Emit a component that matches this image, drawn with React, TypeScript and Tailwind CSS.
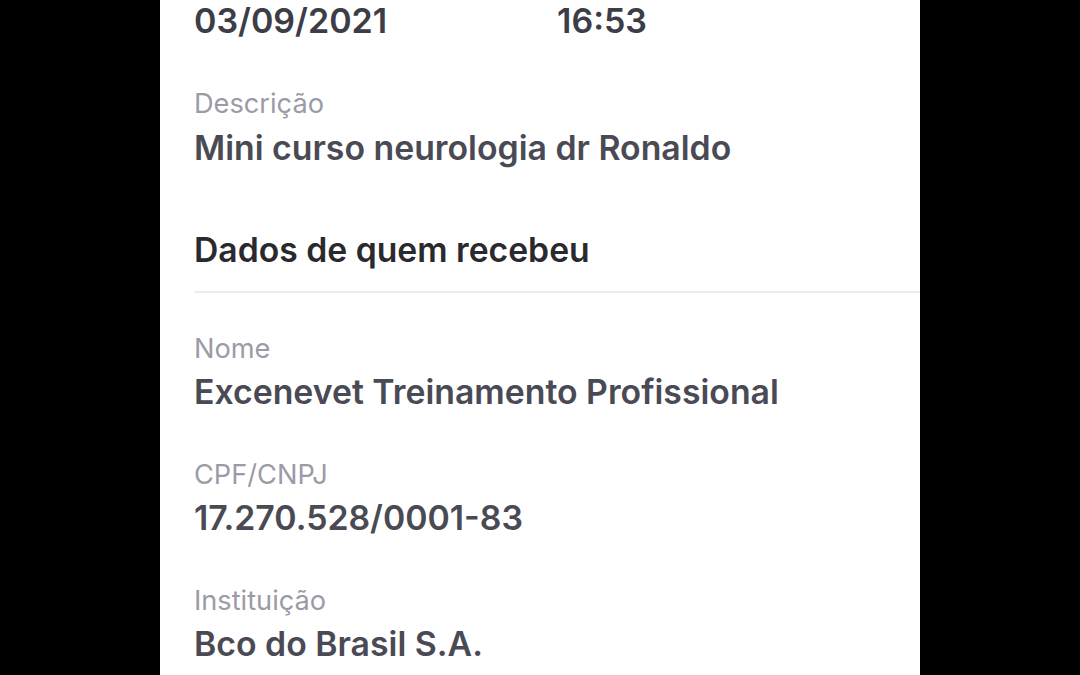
import React from "react";

type Field = { label: string; value: string; mt: string };

const fields: Field[] = [
  { label: "Nome", value: "Excenevet Treinamento Profissional", mt: "mt-[40px]" },
  { label: "CPF/CNPJ", value: "17.270.528/0001-83", mt: "mt-[47px]" },
  { label: "Instituição", value: "Bco do Brasil S.A.", mt: "mt-[47px]" },
];

export default function App() {
  return (
    <main
      className="flex h-[675px] w-[1080px] justify-center overflow-hidden bg-black"
      style={{ fontFamily: "Inter, 'Noto Sans', sans-serif" }}
    >
      <section className="h-full w-[760px] bg-white pl-[34px]">
        {/* date / time */}
        <div className="mt-[1px] flex text-[34px] font-semibold leading-[40px] text-[#3d3d47]">
          <span className="w-[363px]">03/09/2021</span>
          <span>16:53</span>
        </div>

        <div className="mt-[47px] text-[27.2px] leading-[32px] text-[#9b9ba8]">Descrição</div>
        <div className="mt-[8px] text-[33.8px] font-semibold leading-[40px] text-[#4a4a55]">
          Mini curso neurologia dr Ronaldo
        </div>

        <h2 className="mt-[62px] text-[33.7px] font-semibold leading-[40px] text-[#2a2a2e]">
          Dados de quem recebeu
        </h2>
        <div className="mt-[21px] h-[2px] bg-[#ececef]" />

        {fields.map((f) => (
          <div key={f.label} className={f.mt}>
            <div className="text-[27.2px] leading-[32px] text-[#9b9ba8]">{f.label}</div>
            <div className="mt-[7px] text-[33.8px] font-semibold leading-[40px] text-[#4a4a55]">
              {f.value}
            </div>
          </div>
        ))}
      </section>
    </main>
  );
}
